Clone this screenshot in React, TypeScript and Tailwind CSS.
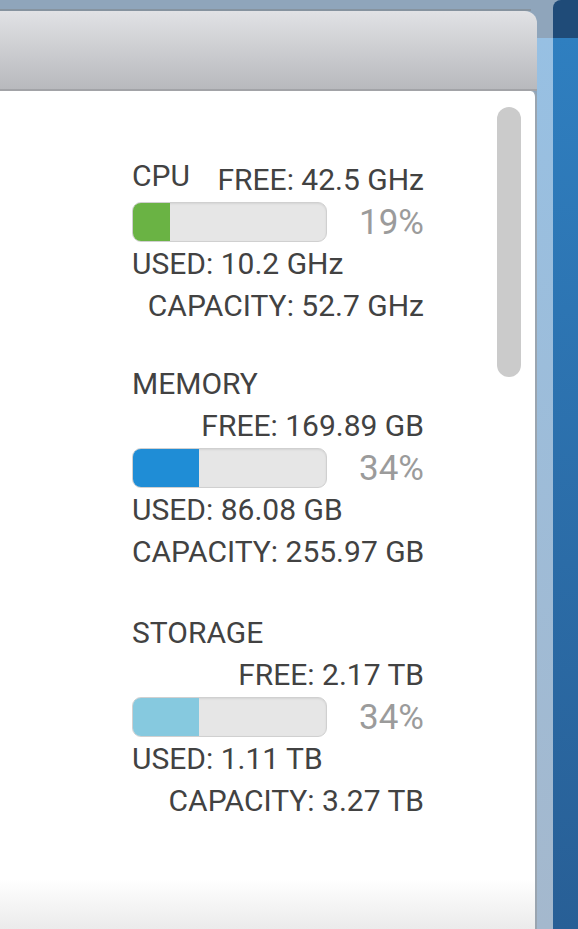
import React from "react";

type Stat = {
  title: string;
  free: string;
  used: string;
  capacity: string;
  pct: number;
  fill: string;
  gap: string;
};

const stats: Stat[] = [
  { title: "CPU", free: "FREE: 42.5 GHz", used: "USED: 10.2 GHz", capacity: "CAPACITY: 52.7 GHz", pct: 19, fill: "bg-[#6ab344]", gap: "mt-0" },
  { title: "MEMORY", free: "FREE: 169.89 GB", used: "USED: 86.08 GB", capacity: "CAPACITY: 255.97 GB", pct: 34, fill: "bg-[#1f8dd6]", gap: "mt-[40px]" },
  { title: "STORAGE", free: "FREE: 2.17 TB", used: "USED: 1.11 TB", capacity: "CAPACITY: 3.27 TB", pct: 34, fill: "bg-[#86c9df]", gap: "mt-[43px]" },
];

const StatBlock = ({ s }: { s: Stat }) => (
  <div className={`flex flex-wrap items-start w-[292px] text-[30px] leading-[42px] text-[#424242] whitespace-nowrap ${s.gap}`}>
    <span className="-mt-1">{s.title}</span>
    <span className="ml-auto">{s.free}</span>

    {/* usage bar + percent */}
    <div className="w-full h-[42px] flex items-center justify-between">
      <div className="w-[195px] h-[40px] rounded-[9px] border-[1.5px] border-[#d0d0d0] bg-[#e6e6e6] overflow-hidden shadow-[inset_0_1px_2px_rgba(0,0,0,0.08)]">
        <div className={`h-full ${s.fill}`} style={{ width: `${s.pct}%` }} />
      </div>
      <span className="text-[35px] leading-none text-[#9b9b9b]">{s.pct}%</span>
    </div>

    <span>{s.used}</span>
    <span className="ml-auto">{s.capacity}</span>
  </div>
);

export default function App() {
  return (
    <div
      className="w-[578px] h-[929px] overflow-hidden flex bg-[#8fa5bb]"
      style={{ fontFamily: "Roboto, 'Liberation Sans', sans-serif" }}
    >
      {/* main panel */}
      <div className="w-[537px] flex flex-col pt-[9px]">
        <div className="h-[2px] bg-[#86939f] mr-[6px]" />
        <div className="h-[80px] rounded-tr-[12px] bg-gradient-to-b from-[#e1e2e5] to-[#b8b9bd] border-b-[2px] border-[#a2a3a7]" />
        <div className="relative flex-1 flex flex-col bg-white rounded-tr-[6px] border-r-[2px] border-[#9aa5b0]">
          <div className="pl-[132px] pt-[68px] flex flex-col">
            {stats.map((s) => (
              <StatBlock key={s.title} s={s} />
            ))}
          </div>
          <div className="flex-1" />
          <div className="h-[50px] bg-gradient-to-b from-white to-[#ebebeb]" />

          {/* scroll thumb */}
          <div className="absolute left-[497px] top-[16px] w-[24px] h-[270px] rounded-full bg-[#cbcbcb]" />
        </div>
      </div>

      {/* light strip */}
      <div className="w-[16px] flex flex-col">
        <div className="h-[38px] bg-[#8fa5bb]" />
        <div className="flex-1 bg-gradient-to-b from-[#97c0e3] to-[#a4b8cd]" />
      </div>

      {/* blue sidebar edge */}
      <div className="flex-1 flex flex-col">
        <div className="h-[38px] bg-[#1f4b78] rounded-tl-[8px]" />
        <div className="flex-1 bg-gradient-to-b from-[#2f7fc0] to-[#285f96]" />
      </div>
    </div>
  );
}
